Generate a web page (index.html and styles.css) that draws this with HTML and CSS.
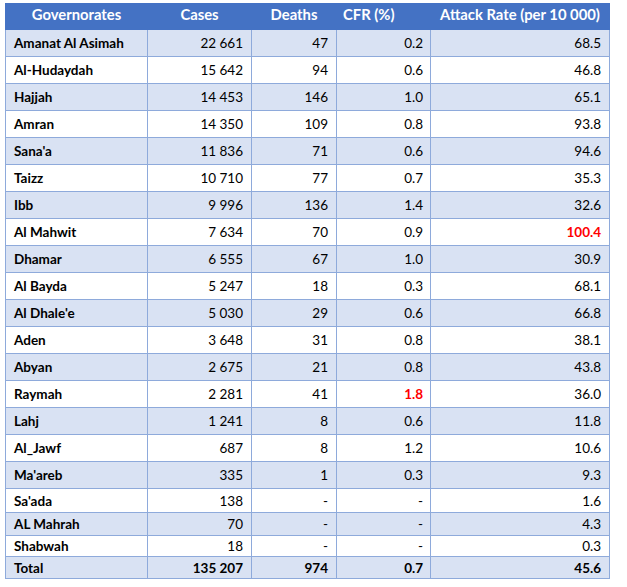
FILE: index.html
```html
<!DOCTYPE html>
<html>
<head>
<meta charset="utf-8">
<link rel="stylesheet" href="styles.css">
</head>
<body>
<div class="page">
<table class="tbl">
  <colgroup>
    <col class="c1"><col class="c2"><col class="c3"><col class="c4"><col class="c5">
  </colgroup>
  <thead>
    <tr class="head">
      <th>Governorates</th><th>Cases</th><th>Deaths</th><th class="left">CFR (%)</th><th>Attack Rate (per 10 000)</th>
    </tr>
  </thead>
  <tbody>
    <tr class="alt"><td>Amanat Al Asimah</td><td>22 661</td><td>47</td><td>0.2</td><td>68.5</td></tr>
    <tr><td>Al-Hudaydah</td><td>15 642</td><td>94</td><td>0.6</td><td>46.8</td></tr>
    <tr class="alt"><td>Hajjah</td><td>14 453</td><td>146</td><td>1.0</td><td>65.1</td></tr>
    <tr><td>Amran</td><td>14 350</td><td>109</td><td>0.8</td><td>93.8</td></tr>
    <tr class="alt"><td>Sana'a</td><td>11 836</td><td>71</td><td>0.6</td><td>94.6</td></tr>
    <tr><td>Taizz</td><td>10 710</td><td>77</td><td>0.7</td><td>35.3</td></tr>
    <tr class="alt"><td>Ibb</td><td>9 996</td><td>136</td><td>1.4</td><td>32.6</td></tr>
    <tr><td>Al Mahwit</td><td>7 634</td><td>70</td><td>0.9</td><td class="red">100.4</td></tr>
    <tr class="alt"><td>Dhamar</td><td>6 555</td><td>67</td><td>1.0</td><td>30.9</td></tr>
    <tr><td>Al Bayda</td><td>5 247</td><td>18</td><td>0.3</td><td>68.1</td></tr>
    <tr class="alt"><td>Al Dhale'e</td><td>5 030</td><td>29</td><td>0.6</td><td>66.8</td></tr>
    <tr><td>Aden</td><td>3 648</td><td>31</td><td>0.8</td><td>38.1</td></tr>
    <tr class="alt"><td>Abyan</td><td>2 675</td><td>21</td><td>0.8</td><td>43.8</td></tr>
    <tr><td>Raymah</td><td>2 281</td><td>41</td><td class="red">1.8</td><td>36.0</td></tr>
    <tr class="alt"><td>Lahj</td><td>1 241</td><td>8</td><td>0.6</td><td>11.8</td></tr>
    <tr><td>Al_Jawf</td><td>687</td><td>8</td><td>1.2</td><td>10.6</td></tr>
    <tr class="alt"><td>Ma'areb</td><td>335</td><td>1</td><td>0.3</td><td>9.3</td></tr>
    <tr class="s1"><td>Sa'ada</td><td>138</td><td>-</td><td>-</td><td>1.6</td></tr>
    <tr class="alt s2"><td>AL Mahrah</td><td>70</td><td>-</td><td>-</td><td>4.3</td></tr>
    <tr class="s3"><td>Shabwah</td><td>18</td><td>-</td><td>-</td><td>0.3</td></tr>
    <tr class="alt s4 total"><td>Total</td><td>135 207</td><td>974</td><td>0.7</td><td>45.6</td></tr>
  </tbody>
</table>
</div>
</body>
</html>
```

FILE: styles.css
```css
html, body {
  margin: 0;
  padding: 0;
  background: #ffffff;
}

.page {
  padding: 3px 0 0 5px;
  font-family: Lato, "Open Sans", sans-serif;
  color: #000000;
}

.tbl {
  border-collapse: collapse;
  table-layout: fixed;
  width: 604px;
  font-size: 13.5px;
}

.c1 { width: 142px; }
.c2 { width: 104px; }
.c3 { width: 85px; }
.c4 { width: 94px; }
.c5 { width: 179px; }

.head th {
  background: #4472c4;
  color: #ffffff;
  font-weight: 700;
  font-size: 14.8px;
  text-align: center;
  height: 26px;
  padding: 0 4px 5px;
  box-sizing: border-box;
  border: 1px solid #4472c4;
  vertical-align: middle;
}

.head th.left {
  text-align: left;
  padding-left: 6px;
}

.tbl td {
  border: 1px solid #8eaadb;
  height: 27px;
  box-sizing: border-box;
  padding: 0 8px 0 8px;
  text-align: right;
  vertical-align: middle;
  background: #ffffff;
}

.tbl tr.alt td {
  background: #d9e2f3;
}

.tbl td:first-child {
  text-align: left;
  font-weight: 700;
}

.tbl td:nth-child(4) {
  padding-right: 7px;
}

.tbl tr.s1 td { height: 24px; }
.tbl tr.s2 td { height: 23px; }
.tbl tr.s3 td { height: 21px; }
.tbl tr.s4 td { height: 22px; }

.tbl tr.total td {
  font-weight: 700;
}

.tbl td.red {
  color: #ff0000;
  font-weight: 700;
}
```
